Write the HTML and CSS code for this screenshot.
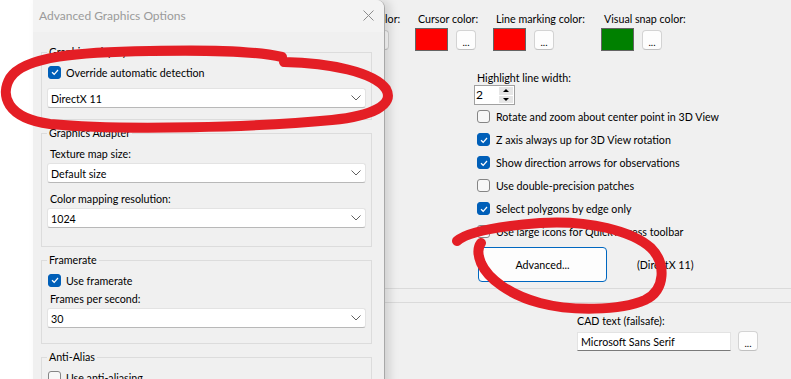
FILE: index.html
```html
<!DOCTYPE html>
<html lang="en">
<head>
    <meta charset="UTF-8">
    <title>Options</title>
    <link rel="stylesheet" href="styles.css">
</head>
<body>
    <div class="window">
        <div class="colors">
            <div class="color-pick pick-sel">
                <span class="pick-label">Selection color:</span>
                <div class="pick-row"><span class="swatch swatch-yellow"></span><button class="dots">...</button></div>
            </div>
            <div class="color-pick pick-cursor">
                <span class="pick-label">Cursor color:</span>
                <div class="pick-row"><span class="swatch swatch-red"></span><button class="dots">...</button></div>
            </div>
            <div class="color-pick pick-line">
                <span class="pick-label">Line marking color:</span>
                <div class="pick-row"><span class="swatch swatch-red"></span><button class="dots">...</button></div>
            </div>
            <div class="color-pick">
                <span class="pick-label">Visual snap color:</span>
                <div class="pick-row"><span class="swatch swatch-green"></span><button class="dots">...</button></div>
            </div>
        </div>
        <div class="view-opts">
            <div class="field-label">Highlight line width:</div>
            <div class="spinner">
                <span class="spin-value">2</span>
                <span class="spin-btns"><span class="spin-up"></span><span class="spin-down"></span></span>
            </div>
            <ul class="checks">
                <li><span class="chk"></span>Rotate and zoom about center point in 3D View</li>
                <li><span class="chk on"><svg viewBox="0 0 10 10"><path d="M2 5.2 L4.2 7.3 L8 3"/></svg></span>Z axis always up for 3D View rotation</li>
                <li><span class="chk on"><svg viewBox="0 0 10 10"><path d="M2 5.2 L4.2 7.3 L8 3"/></svg></span>Show direction arrows for observations</li>
                <li><span class="chk"></span>Use double-precision patches</li>
                <li><span class="chk on"><svg viewBox="0 0 10 10"><path d="M2 5.2 L4.2 7.3 L8 3"/></svg></span>Select polygons by edge only</li>
                <li><span class="chk"></span>Use large icons for Quick Access toolbar</li>
            </ul>
            <div class="adv-row">
                <button class="btn-adv">Advanced...</button>
                <span class="adv-note">(DirectX 11)</span>
            </div>
        </div>
        <hr class="sep">
        <hr class="sep sep-2">
        <div class="cad">
            <div class="field-label">CAD text (failsafe):</div>
            <div class="cad-row">
                <span class="cad-input">Microsoft Sans Serif</span>
                <button class="dots">...</button>
            </div>
        </div>
    </div>

    <div class="dialog">
        <div class="dlg-title">
            <span>Advanced Graphics Options</span>
            <svg class="dlg-close" viewBox="0 0 11 11"><path d="M0.5 0.5 L10.5 10.5 M10.5 0.5 L0.5 10.5"/></svg>
        </div>
        <div class="dlg-body">
            <fieldset class="grp grp-driver">
                <legend>Graphics Display Driver</legend>
                <div class="check-row"><span class="chk on"><svg viewBox="0 0 10 10"><path d="M2 5.2 L4.2 7.3 L8 3"/></svg></span>Override automatic detection</div>
                <div class="combo"><span>DirectX 11</span><svg viewBox="0 0 10 6"><path d="M0.5 0.5 L5 5 L9.5 0.5"/></svg></div>
            </fieldset>
            <fieldset class="grp grp-adapter">
                <legend>Graphics Adapter</legend>
                <div class="grp-label">Texture map size:</div>
                <div class="combo"><span>Default size</span><svg viewBox="0 0 10 6"><path d="M0.5 0.5 L5 5 L9.5 0.5"/></svg></div>
                <div class="grp-label">Color mapping resolution:</div>
                <div class="combo"><span>1024</span><svg viewBox="0 0 10 6"><path d="M0.5 0.5 L5 5 L9.5 0.5"/></svg></div>
            </fieldset>
            <fieldset class="grp grp-frames">
                <legend>Framerate</legend>
                <div class="check-row"><span class="chk on"><svg viewBox="0 0 10 10"><path d="M2 5.2 L4.2 7.3 L8 3"/></svg></span>Use framerate</div>
                <div class="grp-label">Frames per second:</div>
                <div class="combo"><span>30</span><svg viewBox="0 0 10 6"><path d="M0.5 0.5 L5 5 L9.5 0.5"/></svg></div>
            </fieldset>
            <fieldset class="grp grp-alias">
                <legend>Anti-Alias</legend>
                <div class="check-row"><span class="chk"></span>Use anti-aliasing</div>
            </fieldset>
        </div>
    </div>

    <svg class="ink" viewBox="0 0 791 379">
        <path d="M284 62 C330 63, 374 72, 386 89 C395 105, 372 116, 332 120 C262 127, 122 131, 50 124 C6 118, 0 95, 10 78 C24 56, 80 52, 150 51 C200 50, 250 50, 282 57"/>
        <path d="M457 241 C468 231, 500 226, 540 223 C590 220, 632 231, 651 248 C666 263, 666 290, 645 300 C620 311, 570 311, 540 303 C510 295, 488 279, 481 263 C477 253, 478 247, 481 243"/>
    </svg>
</body>
</html>
```

FILE: styles.css
```css
* {
    box-sizing: border-box;
}
body {
    margin: 0;
    width: 791px;
    height: 379px;
    overflow: hidden;
    position: relative;
    background: #fff;
    font-family: Lato, "Noto Sans", sans-serif;
    font-size: 10.7px;
    color: #000;
}
button {
    font: inherit;
    color: inherit;
    padding: 0;
}

/* main options window behind the dialog */
.window {
    margin-left: 33px;
    height: 379px;
    background: #f0f0f0;
    padding-top: 11px;
}
.colors {
    display: flex;
    padding-left: 295px;
}
.color-pick {
    display: flex;
    flex-direction: column;
}
.pick-sel { width: 87px; }
.pick-cursor { width: 78px; }
.pick-line { width: 108px; }
.pick-label {
    line-height: 16px;
    padding-left: 3px;
    white-space: nowrap;
}
.pick-sel .pick-label {
    padding-left: 0;
}
.pick-row {
    display: flex;
    align-items: center;
    gap: 8px;
    margin-top: 1px;
}
.swatch {
    width: 33px;
    height: 23px;
    border: 1px solid #646464;
}
.swatch-red { background: #ff0000; }
.swatch-green { background: #008000; }
.swatch-yellow { background: #ffff00; }
.dots {
    width: 20px;
    height: 20px;
    background: #fdfdfd;
    border: 1px solid #d3d3d3;
    border-bottom-color: #c0c0c0;
    border-radius: 4px;
    line-height: 22px;
    font-size: 10px;
}

.view-opts {
    margin-left: 444px;
    margin-top: 19px;
}
.field-label {
    line-height: 15px;
    white-space: nowrap;
}
.spinner {
    display: flex;
    width: 41px;
    height: 20px;
    margin-left: -3px;
    background: #fff;
    border: 1px solid #a0a0a0;
}
.spin-value {
    flex: 1;
    padding-left: 1px;
    line-height: 18px;
    font-size: 12px;
}
.spin-btns {
    width: 15px;
    display: flex;
    flex-direction: column;
    gap: 1px;
    padding: 1px 1px 1px 0;
}
.spin-up, .spin-down {
    flex: 1;
    background: #e6e6e6;
    display: flex;
    align-items: center;
    justify-content: center;
}
.spin-up::after {
    content: '';
    border-left: 3px solid transparent;
    border-right: 3px solid transparent;
    border-bottom: 3px solid #000;
}
.spin-down::after {
    content: '';
    border-left: 3px solid transparent;
    border-right: 3px solid transparent;
    border-top: 3px solid #000;
}

.checks {
    list-style: none;
    margin: 0;
    padding: 0;
}
.checks li {
    height: 23px;
    display: flex;
    align-items: center;
    gap: 6px;
    white-space: nowrap;
}
.chk {
    flex: none;
    width: 13px;
    height: 13px;
    border: 1px solid #858585;
    border-radius: 3px;
    background: #f7f7f7;
    display: flex;
    align-items: center;
    justify-content: center;
}
.chk.on {
    background: #005fb8;
    border-color: #005fb8;
}
.chk svg {
    width: 10px;
    height: 10px;
    fill: none;
    stroke: #fff;
    stroke-width: 1.2;
}

.adv-row {
    display: flex;
    align-items: center;
    margin-top: 4px;
}
.btn-adv {
    width: 129px;
    height: 35px;
    margin-left: 1px;
    background: #fdfdfd;
    border: 1px solid #0067c0;
    border-radius: 4px;
}
.adv-note {
    margin-left: 30px;
}
.sep {
    margin: 6px 0 0;
    border: 0;
    border-top: 1px solid #dadada;
}
.sep-2 {
    margin-top: 13px;
}
.cad {
    margin-left: 544px;
    margin-top: 10px;
}
.cad .field-label {
    line-height: 16px;
}
.cad-row {
    display: flex;
    align-items: center;
    gap: 7px;
    margin-top: 2px;
}
.cad-input {
    width: 154px;
    height: 19px;
    background: #fff;
    border: 1px solid #e3e3e3;
    border-bottom-color: #7a7a7a;
    padding-left: 3px;
    line-height: 17px;
}

/* dialog window on top */
.dialog {
    position: absolute;
    left: 33px;
    top: 0;
    width: 352px;
    height: 400px;
    background: #f0f0f0;
    border-right: 1px solid #a8a8a8;
    border-top-right-radius: 8px;
    box-shadow: 5px 0 10px rgba(0, 0, 0, 0.13);
}
.dlg-title {
    height: 32px;
    background: #f3f3f3;
    border-top-right-radius: 8px;
    display: flex;
    align-items: center;
    justify-content: space-between;
    padding: 0 10px 2px 6px;
    color: #9a9a9a;
    font-size: 12px;
}
.dlg-close {
    width: 11px;
    height: 11px;
    fill: none;
    stroke: #8c8c8c;
    stroke-width: 1;
}
.dlg-body {
    padding: 12px 0 0 8px;
    display: flex;
    flex-direction: column;
    gap: 5px;
}
.grp {
    display: block;
    width: 331px;
    min-width: 0;
    margin: 0;
    padding: 0 5px 15px;
    border: 1px solid #dcdcdc;
}
.grp legend {
    padding: 0 2px;
    line-height: 16px;
}
.grp-driver { padding-bottom: 11px; }
.grp-adapter { padding-bottom: 18px; }
.grp-alias { padding-bottom: 4px; }
.check-row {
    height: 16px;
    display: flex;
    align-items: center;
    gap: 5px;
    margin-top: 4px;
    padding-left: 1px;
}
.grp-label {
    line-height: 16px;
    padding-left: 3px;
    margin-top: 8px;
}
.grp legend + .grp-label {
    margin-top: 5px;
}
.check-row + .grp-label {
    margin-top: 3px;
}
.combo {
    height: 20px;
    margin-top: 1px;
    background: #fff;
    border: 1px solid #e3e3e3;
    border-bottom-color: #b8b8b8;
    border-radius: 3px;
    display: flex;
    align-items: center;
    justify-content: space-between;
    padding: 0 4px 0 3px;
}
.check-row + .combo {
    margin-top: 8px;
}
.combo svg {
    width: 10px;
    height: 6px;
    fill: none;
    stroke: #606060;
    stroke-width: 1;
}

/* red marker annotations */
.ink {
    position: absolute;
    left: 0;
    top: 0;
    width: 791px;
    height: 379px;
    pointer-events: none;
    fill: none;
    stroke: #e41e25;
    stroke-width: 10;
    stroke-linecap: round;
    stroke-linejoin: round;
}
```
